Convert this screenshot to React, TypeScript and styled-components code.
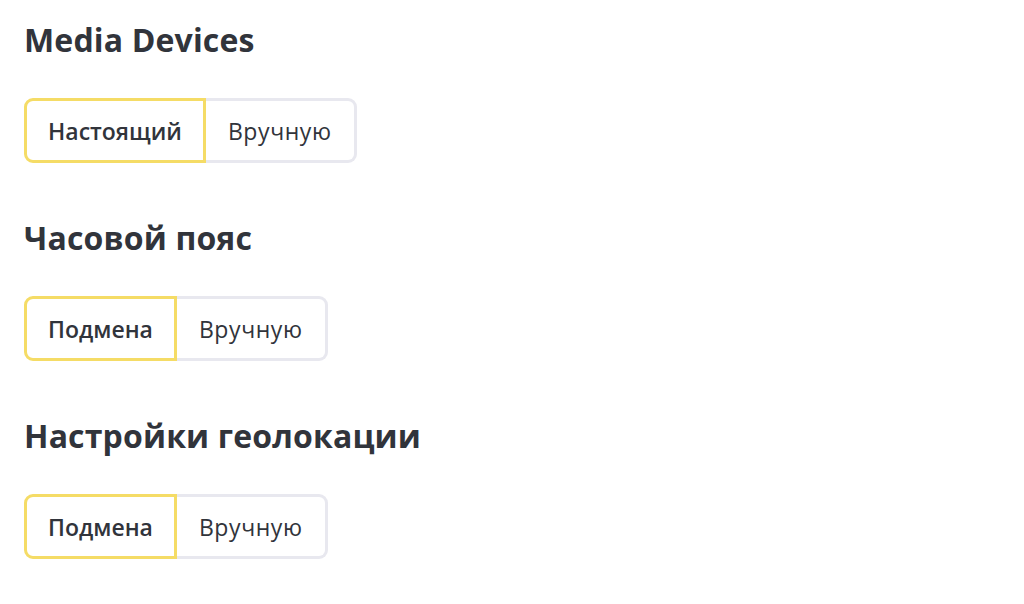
import React from 'react';
import styled, {createGlobalStyle} from 'styled-components';

const GlobalStyle = createGlobalStyle`
    body {
        margin: 0;
        background: #ffffff;
        font-family: "Open Sans", "Noto Sans", sans-serif;
        color: #31343b;
    }
`

type Option = {
    label: string
    active?: boolean
}

type SectionType = {
    title: string
    options: Option[]
}

const sections: SectionType[] = [
    {title: 'Media Devices', options: [{label: 'Настоящий', active: true}, {label: 'Вручную'}]},
    {title: 'Часовой пояс', options: [{label: 'Подмена', active: true}, {label: 'Вручную'}]},
    {title: 'Настройки геолокации', options: [{label: 'Подмена', active: true}, {label: 'Вручную'}]},
]

export default function App() {
    return (
        <>
            <GlobalStyle/>
            <StyledPage>
                {sections.map(section => (
                    <StyledSection key={section.title}>
                        <StyledTitle>{section.title}</StyledTitle>
                        <StyledSwitch>
                            {section.options.map(option => (
                                <StyledOption key={option.label} $active={option.active}>
                                    {option.label}
                                </StyledOption>
                            ))}
                        </StyledSwitch>
                    </StyledSection>
                ))}
            </StyledPage>
        </>
    )
}

const StyledPage = styled.div`
    display: flex;
    flex-direction: column;
    gap: 54px;
    padding: 19px 24px;
`

const StyledSection = styled.section`
    display: flex;
    flex-direction: column;
    align-items: flex-start;
    gap: 37px;
`

const StyledTitle = styled.h2`
    margin: 0;
    font-size: 32px;
    line-height: 42px;
    letter-spacing: 0.15px;
    font-weight: 700;
    color: #31343b;
`

const StyledSwitch = styled.div`
    display: flex;
`

const StyledOption = styled.button<{ $active?: boolean }>`
    display: flex;
    align-items: center;
    box-sizing: border-box;
    height: 65px;
    padding: 0 21px;
    font-family: inherit;
    font-size: 23px;
    letter-spacing: ${props => props.$active ? '0' : '0.6px'};
    font-weight: ${props => props.$active ? 600 : 400};
    color: #31343b;
    background: #ffffff;
    border: 3px solid ${props => props.$active ? '#f5dc66' : '#e8e8ef'};
    border-radius: 0;
    cursor: pointer;

    &:first-child {
        border-radius: 9px 0 0 9px;
    }

    &:last-child {
        border-left: none;
        border-radius: 0 9px 9px 0;
        padding: 0 22px;
    }
`
